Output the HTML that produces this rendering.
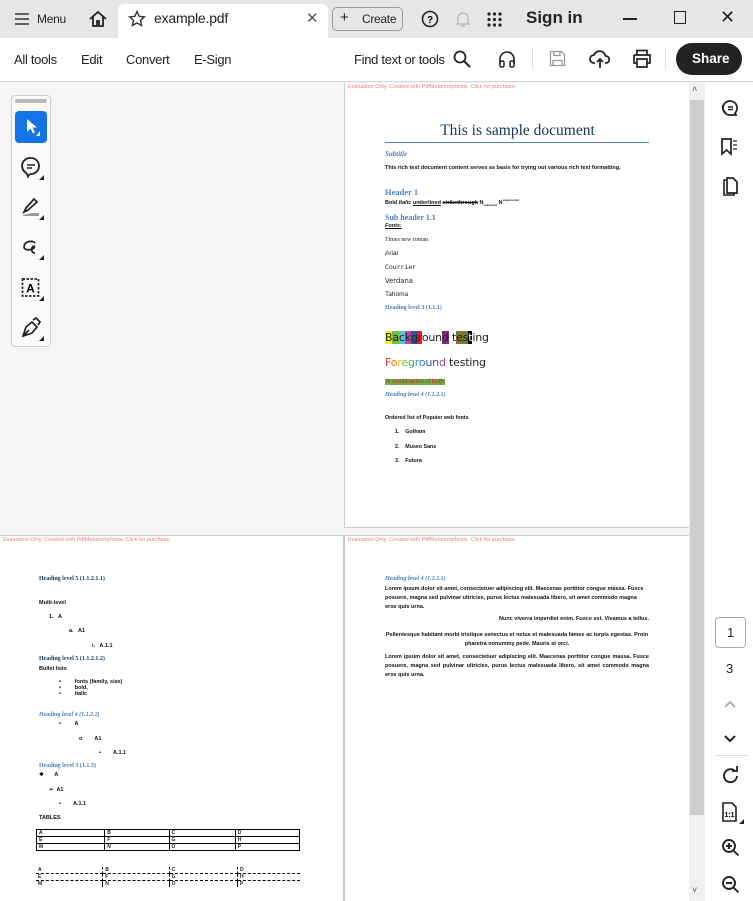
<!DOCTYPE html>
<html><head><meta charset="utf-8"><style>
*{margin:0;padding:0;box-sizing:border-box}
body{width:753px;height:901px;overflow:hidden;font-family:"Liberation Sans",sans-serif;background:#f5f5f5;position:relative;color:#222}
.a{position:absolute}
.tab{top:0;left:0;width:753px;height:38px;background:#e6e6e6}
.tb{top:38px;left:0;width:753px;height:44px;background:#fff;border-bottom:1px solid #d6d6d6}
.t{position:absolute;white-space:nowrap}
.n{font-size:13px;letter-spacing:-.3px}
.pg{background:#fff;position:absolute;overflow:hidden}
.ev{position:absolute;font-size:5.5px;color:#f08080}
.s{font-size:5.5px;font-weight:bold;color:#111}
.h{color:#4a7ebf;font-family:"Liberation Serif",serif;font-weight:bold}
svg{position:absolute}
</style></head><body>
<div class="a tab"></div>
<div class="a" style="left:118px;top:4px;width:210px;height:34px;background:#fff;border-radius:6px 6px 0 0"></div>
<svg style="left:14px;top:12px" width="16" height="14"><path d="M1 2h14M1 7h14M1 12h14" stroke="#333" stroke-width="1.6"/></svg>
<div class="t" style="left:37px;top:12px;font-size:12px;letter-spacing:-.3px">Menu</div>
<svg style="left:88px;top:9px" width="20" height="20"><path d="M2 10L10 3l8 7M5 8v9h4v-5h2v5h4V8" fill="none" stroke="#222" stroke-width="1.8"/></svg>
<svg style="left:128px;top:10px" width="18" height="18"><path d="M9 1.5l2.2 4.8 5.2.6-3.9 3.5 1.1 5.1L9 12.9l-4.6 2.6 1.1-5.1L1.6 6.9l5.2-.6z" fill="none" stroke="#333" stroke-width="1.4"/></svg>
<div class="t" style="left:154px;top:10px;font-size:14px;letter-spacing:-.2px">example.pdf</div>
<div class="t" style="left:306px;top:9px;font-size:15px;color:#555">✕</div>
<div class="a" style="left:332px;top:7px;width:71px;height:24px;border:1px solid #999;border-radius:5px"></div>
<div class="t" style="left:340px;top:9px;font-size:15px">+</div>
<div class="t" style="left:362px;top:12px;font-size:12px;letter-spacing:-.3px">Create</div>
<svg style="left:421px;top:10px" width="18" height="18"><circle cx="9" cy="9" r="7.5" fill="none" stroke="#222" stroke-width="1.6"/><text x="9" y="13" font-size="10" font-weight="bold" text-anchor="middle" font-family="Liberation Sans">?</text></svg>
<svg style="left:455px;top:10px" width="16" height="18"><path d="M3 13V8a5 5 0 0110 0v5l1 1H2zM6 16h4" fill="none" stroke="#bbb" stroke-width="1.4"/></svg>
<svg style="left:487px;top:12px" width="15" height="15"><g fill="#222"><circle cx="2" cy="2" r="1.6"/><circle cx="7.5" cy="2" r="1.6"/><circle cx="13" cy="2" r="1.6"/><circle cx="2" cy="7.5" r="1.6"/><circle cx="7.5" cy="7.5" r="1.6"/><circle cx="13" cy="7.5" r="1.6"/><circle cx="2" cy="13" r="1.6"/><circle cx="7.5" cy="13" r="1.6"/><circle cx="13" cy="13" r="1.6"/></g></svg>
<div class="t" style="left:526px;top:8px;font-size:17px;font-weight:bold">Sign in</div>
<div class="a" style="left:623px;top:18px;width:14px;height:1.5px;background:#222"></div>
<div class="a" style="left:674px;top:11px;width:12px;height:13px;border:1.4px solid #222"></div>
<div class="t" style="left:720px;top:7px;font-size:18px;color:#222">✕</div>

<div class="a tb"></div>
<div class="t n" style="left:14px;top:52px">All tools</div>
<div class="t n" style="left:81px;top:52px">Edit</div>
<div class="t n" style="left:126px;top:52px">Convert</div>
<div class="t n" style="left:194px;top:52px">E-Sign</div>
<div class="t n" style="left:354px;top:52px">Find text or tools</div>
<svg style="left:453px;top:50px" width="18" height="18"><circle cx="7" cy="7" r="5.5" fill="none" stroke="#222" stroke-width="1.8"/><path d="M11 11l6 6" stroke="#222" stroke-width="2"/></svg>
<svg style="left:498px;top:50px" width="18" height="18"><path d="M2 14V9a7 7 0 0114 0v5" fill="none" stroke="#222" stroke-width="1.6"/><rect x="2" y="11" width="4" height="6" rx="1.5" fill="none" stroke="#222" stroke-width="1.5"/><rect x="12" y="11" width="4" height="6" rx="1.5" fill="none" stroke="#222" stroke-width="1.5"/></svg>
<div class="a" style="left:532px;top:49px;width:1px;height:20px;background:#ddd"></div>
<svg style="left:549px;top:50px" width="17" height="17"><path d="M1.5 1.5h11l3 3v11h-14z M5 1.5v4h6v-4 M4 15.5v-5h9v5" fill="none" stroke="#999" stroke-width="1.3"/></svg>
<svg style="left:589px;top:48px" width="22" height="22"><path d="M6 15H5a4 4 0 010-8 6 6 0 0111.5 1 3.5 3.5 0 01.5 7h-1M11 20v-9M8 14l3-3 3 3" fill="none" stroke="#222" stroke-width="1.8"/></svg>
<svg style="left:632px;top:49px" width="20" height="19"><path d="M5 6V1.5h10V6 M2 6h16v8h-3 M5 14H2V6 M5 10h10v8H5z" fill="none" stroke="#222" stroke-width="1.7"/></svg>
<div class="a" style="left:665px;top:49px;width:1px;height:20px;background:#ddd"></div>
<div class="a" style="left:676px;top:43px;width:66px;height:32px;border-radius:16px;background:#222"></div>
<div class="t" style="left:692px;top:51px;font-size:13.5px;font-weight:bold;color:#fff">Share</div>

<div class="a" style="left:11px;top:95px;width:40px;height:252px;border:1px solid #ccc;border-radius:4px;background:#fafafa"></div>
<div class="a" style="left:15px;top:99px;width:32px;height:4px;border-radius:2px;background:#b8b8b8"></div>
<div class="a" style="left:15px;top:111px;width:32px;height:32px;border-radius:4px;background:#1473e6"></div>
<svg style="left:24px;top:117px" width="16" height="20"><path d="M3 2v13l3.5-3.5 2.5 5 2-1-2.5-5H13z" fill="#fff"/><path d="M16 14v5h-4z" fill="#fff"/></svg>
<svg style="left:20px;top:155px" width="26" height="26"><path d="M11 3a8 8 0 110 16c-1.5 0-2 1-3 2.5-.5-2-1-3-2.5-4A8 8 0 0111 3z" fill="none" stroke="#222" stroke-width="1.8"/><path d="M7 10h8M7 13h5" stroke="#222" stroke-width="1.6"/><path d="M24 20v5h-5z" fill="#222"/></svg>
<svg style="left:20px;top:195px" width="26" height="26"><path d="M4 17l2-4 8-9 3 3-9 8z" fill="none" stroke="#222" stroke-width="1.7"/><path d="M3 20l9-2h7v3H3z" fill="#999"/><path d="M24 20v5h-5z" fill="#222"/></svg>
<svg style="left:20px;top:235px" width="26" height="26"><path d="M15 8c-2-3-11-2-11 4 0 4 8 3 10 1 1.5-1.5-1-3-2 0-1 2 0 5 3 5" fill="none" stroke="#222" stroke-width="1.7"/><path d="M24 20v5h-5z" fill="#222"/></svg>
<svg style="left:20px;top:276px" width="26" height="26"><rect x="2.5" y="3" width="16" height="17" fill="none" stroke="#222" stroke-width="1.7" stroke-dasharray="2.5 1.5"/><text x="10.5" y="16.5" font-size="12" font-weight="bold" text-anchor="middle" font-family="Liberation Sans">A</text><path d="M24 20v5h-5z" fill="#222"/></svg>
<svg style="left:20px;top:316px" width="26" height="26"><path d="M3 20l3-9 6-5 5 5-5 6zM3 20l6-6M13 4l3-2 4 4-2 3" fill="none" stroke="#222" stroke-width="1.7"/><path d="M24 20v5h-5z" fill="#222"/></svg>

<div class="pg" style="left:344px;top:83px;width:345px;height:445px;border-left:1px solid #ccc;border-bottom:1px solid #ccc">
<div class="ev" style="left:3px;top:1px">Evaluation Only. Created with PdfMetamorphosis. Click for purchase.</div>
<div class="t" style="left:0;width:345px;top:39px;text-align:center;font-family:'Liberation Serif',serif;font-size:15.5px;color:#17365d">This is sample document</div>
<div class="a" style="left:40px;top:59px;width:264px;height:1px;background:#4f81bd"></div>
<div class="t h" style="left:40px;top:67px;font-size:7px;font-style:italic">Subtitle</div>
<div class="t s" style="left:40px;top:82px;font-size:5.5px">This rich text document content serves as basis for trying out various rich text formatting.</div>
<div class="t h" style="left:40px;top:104px;font-size:8.5px;color:#4f81bd">Header 1</div>
<div class="t s" style="left:40px;top:115px">Bold <i>Italic</i> <u>underlined</u> <s>strikethrough</s> N<sub style="font-size:3px">subscript</sub> N<sup style="font-size:3px">superscript</sup></div>
<div class="t h" style="left:40px;top:130px;font-size:8px">Sub header 1.1</div>
<div class="t s" style="left:40px;top:140px"><i><u>Fonts:</u></i></div>
<div class="t" style="left:40px;top:154px;font-size:6px;font-family:'Liberation Serif',serif">Times new roman</div>
<div class="t" style="left:40px;top:167px;font-size:6.5px">Arial</div>
<div class="t" style="left:40px;top:181px;font-size:6.5px;font-family:'Liberation Mono',monospace">Courrier</div>
<div class="t" style="left:40px;top:194px;font-size:6.8px;font-family:'DejaVu Sans',sans-serif">Verdana</div>
<div class="t" style="left:40px;top:208px;font-size:6.5px">Tahoma</div>
<div class="t h" style="left:40px;top:222px;font-size:6px">Heading level 3 (1.1.1)</div>
<div class="t" style="left:40px;top:248px;font-size:11px;font-family:'DejaVu Sans',sans-serif;letter-spacing:-.2px"><span style="background:#ffef00">B</span><span style="background:#70c040">a</span><span style="background:#5bc0de">c</span><span style="background:#b04fa0">k</span><span style="background:#3050a0">g</span><span style="background:#e02020">r</span>oun<span style="background:#7b2a80">d</span> t<span style="background:#7a7a30">es</span><span style="background:#000;color:#fff">t</span>ing</div>
<div class="t" style="left:40px;top:273px;font-size:11px;font-family:'DejaVu Sans',sans-serif;letter-spacing:-.2px"><span style="color:#e03030">F</span><span style="color:#f07020">o</span><span style="color:#f0c020">r</span><span style="color:#70c040">e</span><span style="color:#40b060">g</span><span style="color:#30a0d0">r</span><span style="color:#3070d0">o</span><span style="color:#3050b0">u</span><span style="color:#7030a0">n</span><span style="color:#a040a0">d</span> testing</div>
<div class="t" style="left:40px;top:296px;font-size:6px;background:#6ab04a;color:#e02020;padding:0 1px">A combination of both</div>
<div class="t h" style="left:40px;top:309px;font-size:6px;font-style:italic">Heading level 4 (1.1.2.1)</div>
<div class="t s" style="left:40px;top:332px;font-size:5.3px">Ordered list of Popuier web fonts</div>
<div class="t s" style="left:50px;top:346px;font-size:5.3px">1.&nbsp;&nbsp;&nbsp; Gotham</div>
<div class="t s" style="left:50px;top:361px;font-size:5.3px">2.&nbsp;&nbsp;&nbsp; Museo Sans</div>
<div class="t s" style="left:50px;top:375px;font-size:5.3px">3.&nbsp;&nbsp;&nbsp; Futura</div>
</div>
<div class="a" style="left:0;top:535px;width:689px;height:1px;background:#c8c8c8"></div>

<div class="pg" style="left:0;top:536px;width:343px;height:365px">
<div class="ev" style="left:3px;top:1px">Evaluation Only. Created with PdfMetamorphosis. Click for purchase.</div>
<div class="t h" style="left:39px;top:40px;font-size:6px;color:#17365d">Heading level 5 (1.1.2.1.1)</div>
<div class="t s" style="left:39px;top:64px">Multi-level</div>
<div class="t s" style="left:49px;top:78px">1.&nbsp;&nbsp; A</div>
<div class="t s" style="left:69px;top:92px">a.&nbsp;&nbsp; A1</div>
<div class="t s" style="left:92px;top:107px">i.&nbsp;&nbsp; A.1.1</div>
<div class="t h" style="left:39px;top:120px;font-size:6px;color:#17365d">Heading level 5 (1.1.2.1.2)</div>
<div class="t s" style="left:39px;top:130px">Bullet lists</div>
<div class="t s" style="left:59px;top:143px;line-height:6px">•&nbsp;&nbsp;&nbsp;&nbsp;&nbsp;&nbsp;&nbsp;&nbsp; fonts (family, size)<br>•&nbsp;&nbsp;&nbsp;&nbsp;&nbsp;&nbsp;&nbsp;&nbsp; bold,<br>•&nbsp;&nbsp;&nbsp;&nbsp;&nbsp;&nbsp;&nbsp;&nbsp; italic</div>
<div class="t h" style="left:39px;top:176px;font-size:6px;font-style:italic">Heading level 4 (1.1.2.2)</div>
<div class="t s" style="left:59px;top:185px">•&nbsp;&nbsp;&nbsp;&nbsp;&nbsp;&nbsp;&nbsp;&nbsp; A</div>
<div class="t s" style="left:79px;top:200px">o&nbsp;&nbsp;&nbsp;&nbsp;&nbsp;&nbsp;&nbsp; A1</div>
<div class="t s" style="left:99px;top:214px">▪&nbsp;&nbsp;&nbsp;&nbsp;&nbsp;&nbsp;&nbsp; A.1.1</div>
<div class="t h" style="left:39px;top:227px;font-size:6px">Heading level 3 (1.1.3)</div>
<div class="t s" style="left:39px;top:236px">❖&nbsp;&nbsp;&nbsp;&nbsp;&nbsp;&nbsp; A</div>
<div class="t s" style="left:49px;top:251px">➢&nbsp; A1</div>
<div class="t s" style="left:59px;top:265px">▪&nbsp;&nbsp;&nbsp;&nbsp;&nbsp;&nbsp;&nbsp; A.1.1</div>
<div class="t s" style="left:39px;top:279px">TABLES</div>
<table class="a" style="left:36px;top:293px;width:264px;border-collapse:collapse;font-size:5px;font-weight:bold;line-height:6px">
<tr><td style="border:1px solid #000;padding:0 2px">A</td><td style="border:1px solid #000;padding:0 2px">B</td><td style="border:1px solid #000;padding:0 2px">C</td><td style="border:1px solid #000;padding:0 2px">D</td></tr>
<tr><td style="border:1px solid #000;padding:0 2px">E</td><td style="border:1px solid #000;padding:0 2px">F</td><td style="border:1px solid #000;padding:0 2px">G</td><td style="border:1px solid #000;padding:0 2px">H</td></tr>
<tr><td style="border:1px solid #000;padding:0 2px">M</td><td style="border:1px solid #000;padding:0 2px">N</td><td style="border:1px solid #000;padding:0 2px">O</td><td style="border:1px solid #000;padding:0 2px">P</td></tr></table>
<table class="a" style="left:36px;top:331px;width:264px;border-collapse:collapse;font-size:5px;font-weight:bold;line-height:6px">
<tr><td style="border-bottom:1px dashed #000;border-right:1px dashed #000;padding:0 2px">A</td><td style="border-bottom:1px dashed #000;border-right:1px dashed #000;padding:0 2px">B</td><td style="border-bottom:1px dashed #000;border-right:1px dashed #000;padding:0 2px">C</td><td style="border-bottom:1px dashed #000;padding:0 2px">D</td></tr>
<tr><td style="border-bottom:1px dashed #000;border-right:1px dashed #000;padding:0 2px">E</td><td style="border-bottom:1px dashed #000;border-right:1px dashed #000;padding:0 2px">F</td><td style="border-bottom:1px dashed #000;border-right:1px dashed #000;padding:0 2px">G</td><td style="border-bottom:1px dashed #000;padding:0 2px">H</td></tr>
<tr><td style="border-right:1px dashed #000;padding:0 2px">M</td><td style="border-right:1px dashed #000;padding:0 2px">N</td><td style="border-right:1px dashed #000;padding:0 2px">O</td><td style="padding:0 2px">P</td></tr></table>
</div>
<div class="a" style="left:343px;top:536px;width:2px;height:365px;background:#c8c8c8"></div>

<div class="pg" style="left:345px;top:536px;width:344px;height:365px">
<div class="ev" style="left:3px;top:1px">Evaluation Only. Created with PdfMetamorphosis. Click for purchase.</div>
<div class="t h" style="left:40px;top:40px;font-size:6px;font-style:italic">Heading level 4 (1.2.2.1)</div>
<div class="a s" style="left:40px;top:49px;width:264px;line-height:9px">Lorem ipsum dolor sit amet, consectetuer adipiscing elit. Maecenas porttitor congue massa. Fusce posuere, magna sed pulvinar ultricies, purus lectus malesuada libero, sit amet commodo magna eros quis urna.</div>
<div class="a s" style="left:40px;top:80px;width:264px;text-align:right">Nunc viverra imperdiet enim. Fusce est. Vivamus a tellus.</div>
<div class="a s" style="left:40px;top:95px;width:264px;text-align:center;line-height:8.5px">Pellentesque habitant morbi tristique senectus et netus et malesuada fames ac turpis egestas. Proin pharetra nonummy pede. Mauris et orci.</div>
<div class="a s" style="left:40px;top:117px;width:264px;text-align:justify;line-height:9px">Lorem ipsum dolor sit amet, consectetuer adipiscing elit. Maecenas porttitor congue massa. Fusce posuere, magna sed pulvinar ultricies, purus lectus malesuada libero, sit amet commodo magna eros quis urna.</div>
</div>

<div class="a" style="left:689px;top:83px;width:16px;height:818px;background:#f0f0f0"></div>
<div class="a" style="left:690px;top:100px;width:14px;height:715px;background:#cdcdcd"></div>
<div class="t" style="left:692px;top:84px;font-size:9px;color:#555">˄</div>
<div class="t" style="left:692px;top:885px;font-size:9px;color:#555">˅</div>

<div class="a" style="left:705px;top:83px;width:48px;height:818px;background:#fff"></div>
<svg style="left:720px;top:98px" width="22" height="20"><path d="M10 17a7 7 0 110-14 7 7 0 015 12l1 2z" fill="none" stroke="#222" stroke-width="1.8"/><path d="M6 15a7 7 0 01-3-8" fill="none" stroke="#222" stroke-width="1.8"/><path d="M8 9h5M8 11.5h5" stroke="#222" stroke-width="1.5"/></svg>
<svg style="left:720px;top:137px" width="20" height="20"><path d="M2 2h9v15l-4.5-4L2 17z" fill="none" stroke="#222" stroke-width="1.7"/><path d="M13 4h4M13 8h4M13 12h4" stroke="#222" stroke-width="1.3"/></svg>
<svg style="left:721px;top:177px" width="18" height="20"><path d="M5 3H3v15h10v-2" fill="none" stroke="#222" stroke-width="1.6"/><path d="M6 1h6l4 4v11H6z" fill="none" stroke="#222" stroke-width="1.7"/></svg>
<div class="a" style="left:715px;top:617px;width:31px;height:31px;border:1px solid #aaa;border-radius:4px"></div>
<div class="t" style="left:727px;top:625px;font-size:13px;color:#222">1</div>
<div class="t" style="left:726px;top:661px;font-size:13px;color:#222">3</div>
<svg style="left:723px;top:700px" width="14" height="10"><path d="M2 7l5-5 5 5" fill="none" stroke="#aaa" stroke-width="1.8"/></svg>
<svg style="left:723px;top:733px" width="14" height="10"><path d="M2 3l5 5 5-5" fill="none" stroke="#222" stroke-width="2"/></svg>
<div class="a" style="left:715px;top:755px;width:32px;height:1px;background:#ddd"></div>
<svg style="left:721px;top:766px" width="20" height="20"><path d="M16 10a6.5 6.5 0 11-2-5" fill="none" stroke="#222" stroke-width="1.9"/><path d="M11 5h5V0" fill="none" stroke="#222" stroke-width="1.8"/></svg>
<svg style="left:721px;top:801px" width="24" height="24"><path d="M2 2h9l4 4v14H2z" fill="none" stroke="#222" stroke-width="1.6"/><text x="8.5" y="16" font-size="7" font-weight="bold" text-anchor="middle" font-family="Liberation Sans">1:1</text><path d="M23 18v5h-5z" fill="#222"/></svg>
<svg style="left:721px;top:838px" width="20" height="20"><circle cx="8" cy="8" r="6" fill="none" stroke="#222" stroke-width="1.9"/><path d="M12.5 12.5l5 5M5 8h6M8 5v6" stroke="#222" stroke-width="1.9"/></svg>
<svg style="left:721px;top:875px" width="20" height="20"><circle cx="8" cy="8" r="6" fill="none" stroke="#222" stroke-width="1.9"/><path d="M12.5 12.5l5 5M5 8h6" stroke="#222" stroke-width="1.9"/></svg>
</body></html>
